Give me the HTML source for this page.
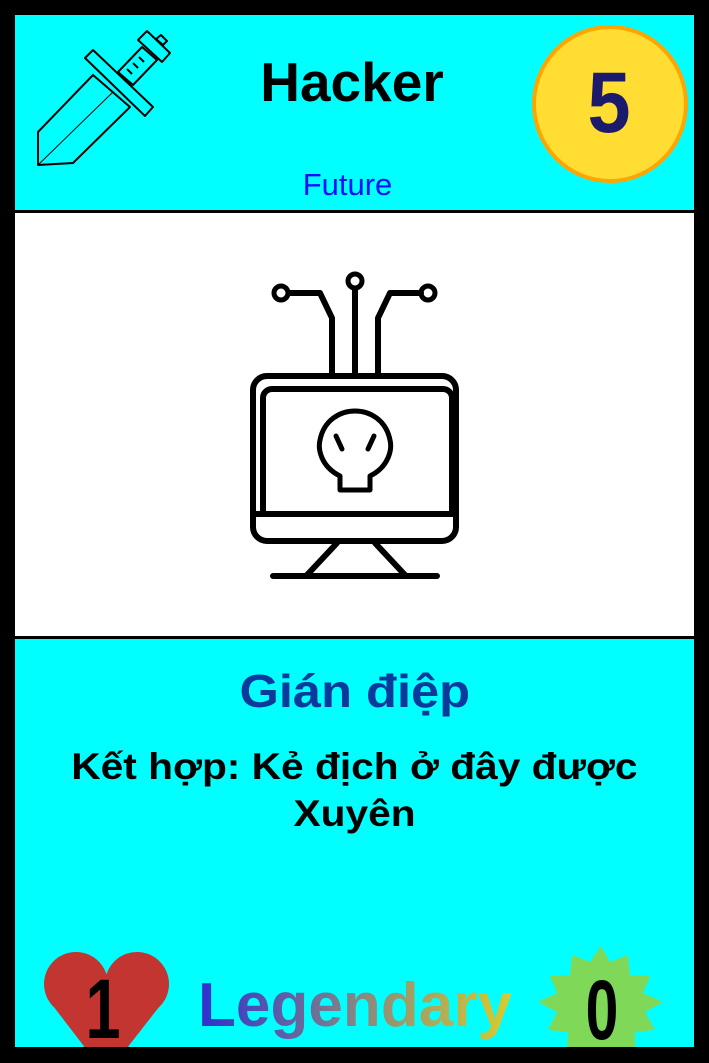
<!DOCTYPE html>
<html><head><meta charset="utf-8"><style>
*{margin:0;padding:0}
body{width:709px;height:1063px;background:#000;position:relative;overflow:hidden;font-family:"Liberation Sans",Arial,sans-serif}
.a{position:absolute}
.t{position:absolute;left:15px;width:679px;text-align:center;white-space:nowrap}
.s{display:inline-block;transform:scaleX(1.1)}
</style></head><body>
<div class="a" style="left:15px;top:15px;width:679px;height:195px;background:#00ffff"></div>
<div class="a" style="left:15px;top:213px;width:679px;height:423px;background:#fff"></div>
<div class="a" style="left:15px;top:639px;width:679px;height:408px;background:#00ffff"></div>

<svg class="a" style="left:0;top:0" width="709" height="1063">
 <defs>
  <clipPath id="c"><rect x="15" y="639" width="679" height="408"/></clipPath>
  <linearGradient id="g" x1="198" x2="512" y1="0" y2="0" gradientUnits="userSpaceOnUse">
  <stop offset="0" stop-color="#2f2fd0"/><stop offset="0.5" stop-color="#858585"/><stop offset="1" stop-color="#d8cc2c"/></linearGradient>
 </defs>
 <!-- sword -->
 <g fill="none" stroke="#000" stroke-width="2" stroke-linejoin="round">
  <polygon points="38,132 93,75 130,107 73,163 38,165"/>
  <line x1="38" y1="165" x2="113" y2="92" stroke-width="1"/>
  <polygon points="85,58 93,50 153,107 145,116"/>
  <polygon points="118,72 142,47 157,60 133,85"/>
  <polygon points="138,40 147,31 170,53 162,62"/>
  <polygon points="156,39 161,35 167,41 163,45"/>
  <line x1="127" y1="69" x2="132" y2="74"/><line x1="133" y1="63" x2="138" y2="68"/><line x1="139" y1="57" x2="144" y2="62"/>
 </g>
 <ellipse cx="610" cy="104" rx="76" ry="77" fill="#ffdd33" stroke="#ffa500" stroke-width="4"/>
 <!-- monitor -->
 <g fill="none" stroke="#000" stroke-width="6" stroke-linecap="round" stroke-linejoin="round">
  <rect x="253" y="376" width="203" height="165" rx="14"/>
  <path d="M263 513 V398 a9 9 0 0 1 9-9 H443 a9 9 0 0 1 9 9 V513"/>
  <line x1="253" y1="514" x2="456" y2="514"/>
  <path d="M337 543 L307 575 M375 543 L405 575 M273 576 H437"/>
  <path d="M340 490 V476 C320 466 318 448 320 440 C324 420 340 411 355 411 C370 411 386 420 390 440 C392 448 390 466 370 476 V490 Z" stroke-width="5"/>
  <path d="M336 436 L342 449 M374 436 L368 449" stroke-width="5"/>
  <path d="M355 376 V290 M289 293 H320 L332 318 V376 M421 293 H390 L378 318 V376"/>
  <circle cx="355" cy="281" r="7" stroke-width="5"/>
  <circle cx="281" cy="293" r="7" stroke-width="5"/>
  <circle cx="428" cy="293" r="7" stroke-width="5"/>
 </g>
 <g clip-path="url(#c)">
 <!-- heart -->
 <g fill="#c33530">
  <circle cx="76" cy="984" r="32"/><circle cx="137" cy="984" r="32"/>
  <polygon points="47,998 106,1075 166,998 106,990"/>
 </g>
 <!-- star -->
 <polygon fill="#80d858" points="601,946 610,962 628,955 630,975 650,976 643,993 663,1002 645,1012 655,1030 635,1032 635,1047 567,1047 568,1032 548,1030 557,1012 538,1002 557,993 550,976 570,975 572,955 590,962"/>
 </g>
 <text x="355" y="1026" text-anchor="middle" font-family="Liberation Sans" font-weight="bold" font-size="62" fill="url(#g)" textLength="314">Legendary</text>
 <text x="0" y="0" transform="translate(103,1038) scale(0.75,1)" text-anchor="middle" font-family="Liberation Sans" font-weight="bold" font-size="84">1</text>
 <text x="0" y="0" transform="translate(602,1039) scale(0.7,1)" text-anchor="middle" font-family="Liberation Sans" font-weight="bold" font-size="84">0</text>
 <text x="0" y="0" transform="translate(609,132) scale(0.9,1)" text-anchor="middle" font-family="Liberation Sans" font-weight="bold" font-size="86" fill="#1c1a6c">5</text>
</svg>

<div class="t" style="top:50px;font-size:55px;font-weight:bold;left:27px;width:650px">Hacker</div>
<div class="t" style="top:167px;font-size:31px;color:#1010ff;left:20px;width:655px">Future</div>
<div class="t" style="top:664px;font-size:46px;font-weight:bold;color:#0b3a9c"><span class="s">Gián điệp</span></div>
<div class="t" style="top:743px;font-size:37px;font-weight:bold;line-height:47px"><span class="s">Kết hợp: Kẻ địch ở đây được</span><br><span class="s">Xuyên</span></div>
</body></html>
